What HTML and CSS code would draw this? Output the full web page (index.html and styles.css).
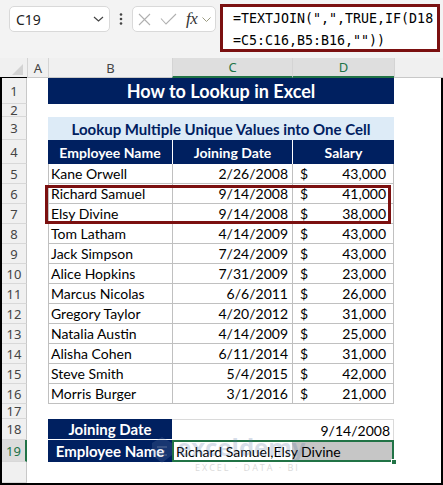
FILE: index.html
```html
<html>
<head>
  <link rel="stylesheet" href="styles.css">
</head>
<body>
<div class="toolbar">
  <div class="namebox">
    <span>C19</span>
    <svg width="11" height="6" viewBox="0 0 11 6"><polyline points="1,1 5.5,5 10,1" fill="none" stroke="#444" stroke-width="1.2"/></svg>
  </div>
  <div class="more">
    <svg width="4" height="12" viewBox="0 0 4 12"><circle cx="2" cy="1.5" r="1.3"/><circle cx="2" cy="6" r="1.3"/><circle cx="2" cy="10.5" r="1.3"/></svg>
  </div>
  <div class="fxbox">
    <svg class="cancel" width="13" height="13" viewBox="0 0 13 13"><path d="M1 1L12 12M12 1L1 12" stroke="#b0b0b0" stroke-width="1.1"/></svg>
    <svg class="enter" width="17" height="12" viewBox="0 0 17 12"><path d="M1 5.5L6 11L16 1" fill="none" stroke="#b0b0b0" stroke-width="1.1"/></svg>
    <span class="fx">fx</span>
    <svg class="drop" width="9" height="5" viewBox="0 0 9 5"><polyline points="0.5,0.5 4.5,4.5 8.5,0.5" fill="none" stroke="#9a9a80" stroke-width="1"/></svg>
  </div>
  <div class="formula">=TEXTJOIN(",",TRUE,IF(D18<br>=C5:C16,B5:B16,""))</div>
</div>

<div class="colheads">
  <div class="corner"><svg width="27" height="19" viewBox="0 0 27 19"><polygon points="23,6 23,17 12,17" fill="#d3d3d3"/></svg></div>
  <div class="ch">A</div>
  <div class="ch">B</div>
  <div class="ch sel">C</div>
  <div class="ch sel">D</div>
  <div class="ch"></div>
</div>

<div class="sheet">
  <!-- row 1 -->
  <div class="rh">1</div><div></div>
  <div class="title">How to Lookup in Excel</div><div></div>
  <!-- row 2 -->
  <div class="rh">2</div><div class="gap"></div>
  <!-- row 3 -->
  <div class="rh">3</div><div></div>
  <div class="subtitle">Lookup Multiple Unique Values into One Cell</div><div></div>
  <!-- row 4 -->
  <div class="rh">4</div><div></div>
  <div class="th">Employee Name</div><div class="th">Joining Date</div><div class="th">Salary</div><div></div>
  <!-- rows 5-16 -->
  <div class="rh">5</div><div></div>
  <div class="td name">Kane Orwell</div><div class="td date">2/26/2008</div><div class="td money"><span>$</span><span>43,000</span></div><div></div>
  <div class="rh">6</div><div></div>
  <div class="td name">Richard Samuel</div><div class="td date">9/14/2008</div><div class="td money"><span>$</span><span>41,000</span></div><div></div>
  <div class="rh">7</div><div></div>
  <div class="td name">Elsy Divine</div><div class="td date">9/14/2008</div><div class="td money"><span>$</span><span>38,000</span></div><div></div>
  <div class="rh">8</div><div></div>
  <div class="td name">Tom Latham</div><div class="td date">4/14/2009</div><div class="td money"><span>$</span><span>43,000</span></div><div></div>
  <div class="rh">9</div><div></div>
  <div class="td name">Jack Simpson</div><div class="td date">7/24/2009</div><div class="td money"><span>$</span><span>43,000</span></div><div></div>
  <div class="rh">10</div><div></div>
  <div class="td name">Alice Hopkins</div><div class="td date">7/31/2009</div><div class="td money"><span>$</span><span>23,000</span></div><div></div>
  <div class="rh">11</div><div></div>
  <div class="td name">Marcus Nicolas</div><div class="td date">6/6/2011</div><div class="td money"><span>$</span><span>26,000</span></div><div></div>
  <div class="rh">12</div><div></div>
  <div class="td name">Gregory Taylor</div><div class="td date">4/20/2012</div><div class="td money"><span>$</span><span>31,000</span></div><div></div>
  <div class="rh">13</div><div></div>
  <div class="td name">Natalia Austin</div><div class="td date">4/14/2009</div><div class="td money"><span>$</span><span>25,000</span></div><div></div>
  <div class="rh">14</div><div></div>
  <div class="td name">Alisha Cohen</div><div class="td date">6/11/2014</div><div class="td money"><span>$</span><span>31,000</span></div><div></div>
  <div class="rh">15</div><div></div>
  <div class="td name">Steve Smith</div><div class="td date">5/4/2015</div><div class="td money"><span>$</span><span>42,000</span></div><div></div>
  <div class="rh">16</div><div></div>
  <div class="td name">Morris Burger</div><div class="td date">3/1/2016</div><div class="td money"><span>$</span><span>21,000</span></div><div></div>
  <!-- row 17 -->
  <div class="rh">17</div><div class="gap"></div>
  <!-- row 18 -->
  <div class="rh">18</div><div></div>
  <div class="label first">Joining Date</div><div class="value">9/14/2008</div><div></div>
  <!-- row 19 -->
  <div class="rh active">19</div><div></div>
  <div class="label">Employee Name</div><div class="result">Richard Samuel,Elsy Divine</div><div></div>
  <!-- rest -->
  <div class="rh"></div><div class="gap"></div>

  <div class="mark"></div>

  <div class="watermark">
    <svg width="24" height="30" viewBox="0 0 24 30"><path d="M12 2L22 8V20L12 28L2 20V8Z" fill="#6d87b0"/><path d="M7 12H17M7 16H15M7 20H17" stroke="#fff" stroke-width="2"/></svg>
    <div>
      <div class="wm-name">exceldemy</div>
      <div class="wm-tag">EXCEL · DATA · BI</div>
    </div>
  </div>
</div>
</body>
</html>
```

FILE: styles.css
```css
body {
  margin: 0;
  width: 443px;
  height: 485px;
  overflow: hidden;
  background: #fff;
  font-family: Lato, 'Liberation Sans', Arial, sans-serif;
  color: #000;
}

/* formula bar */
.toolbar {
  height: 58px;
  box-sizing: border-box;
  padding: 4px 0 0 9px;
  display: flex;
  align-items: flex-start;
  background: #f3f3f3;
}

.namebox, .fxbox {
  margin-top: 2px;
  height: 26px;
  box-sizing: border-box;
  background: #fff;
  border: 1px solid #d9d9d9;
  border-radius: 5px;
  display: flex;
  align-items: center;
}

.namebox {
  width: 101px;
  justify-content: space-between;
  padding: 0 5px 0 6px;
  font: 14px 'Noto Sans', 'Liberation Sans', sans-serif;
  color: #222;
}

.more {
  width: 22px;
  height: 30px;
  display: flex;
  align-items: center;
  justify-content: center;
  fill: #444;
}

.fxbox {
  width: 84px;
  padding-left: 5px;
}

.enter {
  margin-left: 9px;
}

.fx {
  margin-left: 9px;
  font: italic 17px 'Liberation Serif', serif;
  color: #333;
  letter-spacing: -0.5px;
}

.drop {
  margin-left: 5px;
}

.formula {
  margin-left: 4px;
  width: 220px;
  height: 48px;
  box-sizing: border-box;
  border: 3px solid #7b1010;
  background: #fff;
  padding: 1px 0 0 10px;
  font: 13.3px 'DejaVu Sans Mono', 'Liberation Mono', monospace;
  line-height: 22px;
  white-space: nowrap;
  overflow: hidden;
}

/* column headers */
.colheads {
  height: 20px;
  display: grid;
  grid-template-columns: 27px 21px 124px 120px 102px 1fr;
  background: #f0f0f0;
}

.corner {
  border-bottom: 1px solid #000;
}

.ch {
  border-left: 1px solid #d4d4d4;
  border-bottom: 1px solid #c8c8c8;
  display: flex;
  align-items: center;
  justify-content: center;
  font: 13px 'Noto Sans', 'Liberation Sans', sans-serif;
  color: #444;
}

.ch.sel {
  background: #dedede;
  color: #217346;
  border-bottom: 2px solid #217346;
}

/* sheet */
.sheet {
  position: relative;
  height: 407px;
  box-sizing: border-box;
  border: 2px solid #000;
  border-top: 0;
  display: grid;
  grid-template-columns: 25px 21px 124px 120px 102px 1fr;
  grid-template-rows: 26px 13px 23px 24px repeat(12, 20px) 15px 21px 22px 1fr;
  font-size: 14px;
}

.sheet > div {
  box-sizing: border-box;
  overflow: hidden;
  white-space: nowrap;
}

.rh {
  background: #f0f0f0;
  border-right: 1px solid #c8c8c8;
  border-bottom: 1px solid #d8d8d8;
  display: flex;
  align-items: center;
  justify-content: center;
  font: 13px 'Noto Sans', 'Liberation Sans', sans-serif;
  line-height: 12px;
  color: #444;
}

.rh.active {
  background: #dcdcdc;
  color: #217346;
  border-right: 2px solid #217346;
}

.gap {
  grid-column: span 5;
}

.title, .subtitle {
  grid-column: span 3;
  display: flex;
  align-items: center;
  justify-content: center;
  font-weight: bold;
}

.title {
  background: #002060;
  color: #fff;
  font-size: 18px;
}

.subtitle {
  background: #ddebf7;
  color: #002060;
  font-size: 15px;
}

.th {
  background: #002060;
  color: #fff;
  font-weight: bold;
  display: flex;
  align-items: center;
  justify-content: center;
}

.th + .th {
  border-left: 1px solid #fff;
}

.td {
  border-left: 1px solid #c0c0c0;
  border-bottom: 1px solid #c0c0c0;
  display: flex;
  align-items: center;
}

.name {
  padding-left: 2px;
}

.date {
  justify-content: flex-end;
  padding-right: 4px;
}

.money {
  border-right: 1px solid #c0c0c0;
  justify-content: space-between;
  padding: 0 7px 0 7px;
}

.label {
  background: #002060;
  color: #fff;
  font-weight: bold;
  font-size: 15px;
  display: flex;
  align-items: center;
  justify-content: center;
}

.label.first {
  border-bottom: 1px solid #fff;
}

.value {
  grid-column: span 2;
  border-top: 1px solid #dadada;
  border-right: 1px solid #dadada;
  display: flex;
  align-items: center;
  justify-content: flex-end;
  padding-right: 3px;
}

.sheet > .result {
  grid-column: span 2;
  position: relative;
  overflow: visible;
  display: flex;
  align-items: center;
  padding-left: 4px;
  background: linear-gradient(to right, #fff 120px, #c6c6c6 120px);
  box-shadow: inset 0 0 0 2px #217346;
}

.result::after {
  content: '';
  position: absolute;
  right: -3px;
  bottom: -3px;
  width: 6px;
  height: 6px;
  background: #217346;
  border: 1px solid #fff;
  box-sizing: border-box;
}

/* highlight round rows 6-7 */
.sheet > .mark {
  position: absolute;
  left: 43px;
  top: 107px;
  width: 346px;
  height: 39px;
  border: 3px solid #7b1010;
  overflow: visible;
}

.sheet > .watermark {
  position: absolute;
  left: 148px;
  top: 357px;
  display: flex;
  align-items: flex-start;
  gap: 3px;
  opacity: 0.22;
  pointer-events: none;
  overflow: visible;
}

.wm-name {
  font: bold 24px 'Open Sans', sans-serif;
  color: #4f6fa0;
  line-height: 24px;
}

.wm-tag {
  font: 9px 'Open Sans', sans-serif;
  letter-spacing: 2px;
  color: #555;
  margin: 2px 0 0 18px;
}
```
